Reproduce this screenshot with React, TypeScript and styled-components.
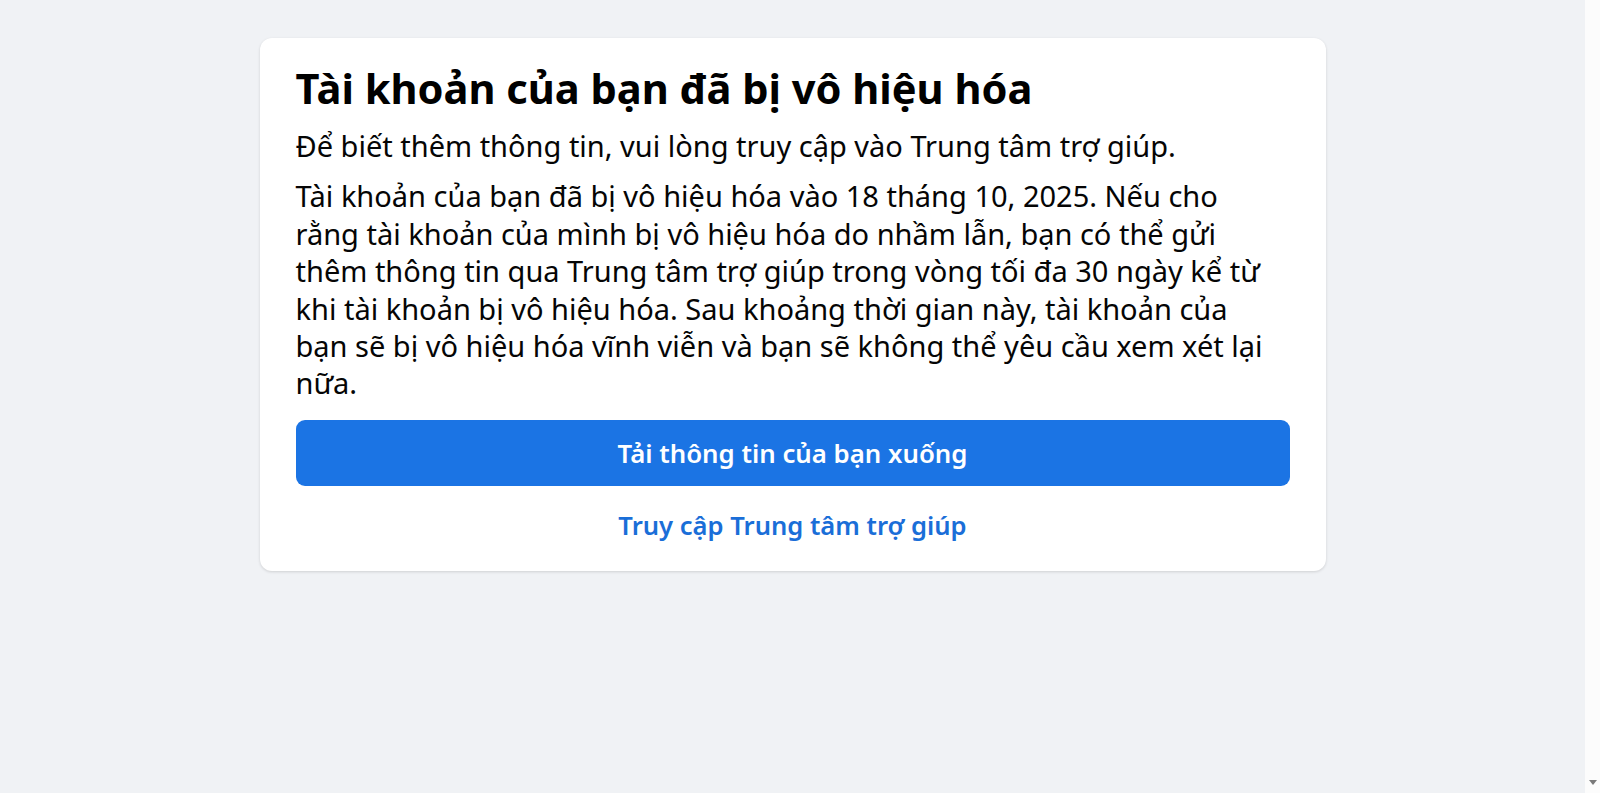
import React from "react";
import styled, { createGlobalStyle } from "styled-components";

const GlobalStyle = createGlobalStyle`
  body {
    margin: 0;
    background: #f0f2f5;
    font-family: "Noto Sans", "Open Sans", Arial, sans-serif;
    color: #050505;
  }
`;

const Viewport = styled.div`
  display: flex;
  height: 100vh;
  overflow: hidden;
`;

const Page = styled.main`
  flex: 1;
  display: flex;
  justify-content: center;
  align-items: flex-start;
  padding-top: 38px;
  box-sizing: border-box;
`;

const ScrollTrack = styled.div`
  width: 15px;
  flex-shrink: 0;
  background: #fcfcfc;
  display: flex;
  flex-direction: column;
  justify-content: flex-end;
  align-items: center;
  padding-bottom: 8px;
  box-sizing: border-box;
`;

const ScrollArrow = styled.div`
  width: 0;
  height: 0;
  border-left: 4.5px solid transparent;
  border-right: 4.5px solid transparent;
  border-top: 5px solid #7a7a7a;
`;

const Card = styled.section`
  width: 1066px;
  box-sizing: border-box;
  background: #ffffff;
  border-radius: 12px;
  box-shadow: 0 1px 3px rgba(0, 0, 0, 0.14);
  padding: 24px 36px 27px;
  display: flex;
  flex-direction: column;
`;

const Title = styled.h1`
  margin: 0;
  font-size: 41.6px;
  line-height: 52px;
  font-weight: 700;
  color: #000;
`;

const Text = styled.p<{ $gap?: number }>`
  margin: ${(p) => p.$gap ?? 0}px 0 0;
  font-size: 29px;
  line-height: 37.4px;
  font-weight: 400;
  color: #050505;
  white-space: nowrap;
`;

const PrimaryButton = styled.button`
  margin-top: 18px;
  height: 66px;
  width: 100%;
  border: none;
  border-radius: 9px;
  background: #1b74e4;
  color: #ffffff;
  font-family: inherit;
  font-size: 25.8px;
  font-weight: 600;
  cursor: pointer;
`;

const LinkButton = styled.a`
  margin-top: 22px;
  align-self: center;
  font-size: 25.6px;
  line-height: 36px;
  font-weight: 600;
  color: #1a6ed8;
  text-decoration: none;
  cursor: pointer;
`;

export default function App() {
  return (
    <>
      <GlobalStyle />
      <Viewport>
        <Page>
          <Card>
            <Title>Tài khoản của bạn đã bị vô hiệu hóa</Title>
            <Text $gap={13}>Để biết thêm thông tin, vui lòng truy cập vào Trung tâm trợ giúp.</Text>
            <Text $gap={13}>
              Tài khoản của bạn đã bị vô hiệu hóa vào 18 tháng 10, 2025. Nếu cho
              <br />
              rằng tài khoản của mình bị vô hiệu hóa do nhầm lẫn, bạn có thể gửi
              <br />
              thêm thông tin qua Trung tâm trợ giúp trong vòng tối đa 30 ngày kể từ
              <br />
              khi tài khoản bị vô hiệu hóa. Sau khoảng thời gian này, tài khoản của
              <br />
              bạn sẽ bị vô hiệu hóa vĩnh viễn và bạn sẽ không thể yêu cầu xem xét lại
              <br />
              nữa.
            </Text>
            <PrimaryButton>Tải thông tin của bạn xuống</PrimaryButton>
            <LinkButton>Truy cập Trung tâm trợ giúp</LinkButton>
          </Card>
        </Page>
        <ScrollTrack>
          <ScrollArrow />
        </ScrollTrack>
      </Viewport>
    </>
  );
}
